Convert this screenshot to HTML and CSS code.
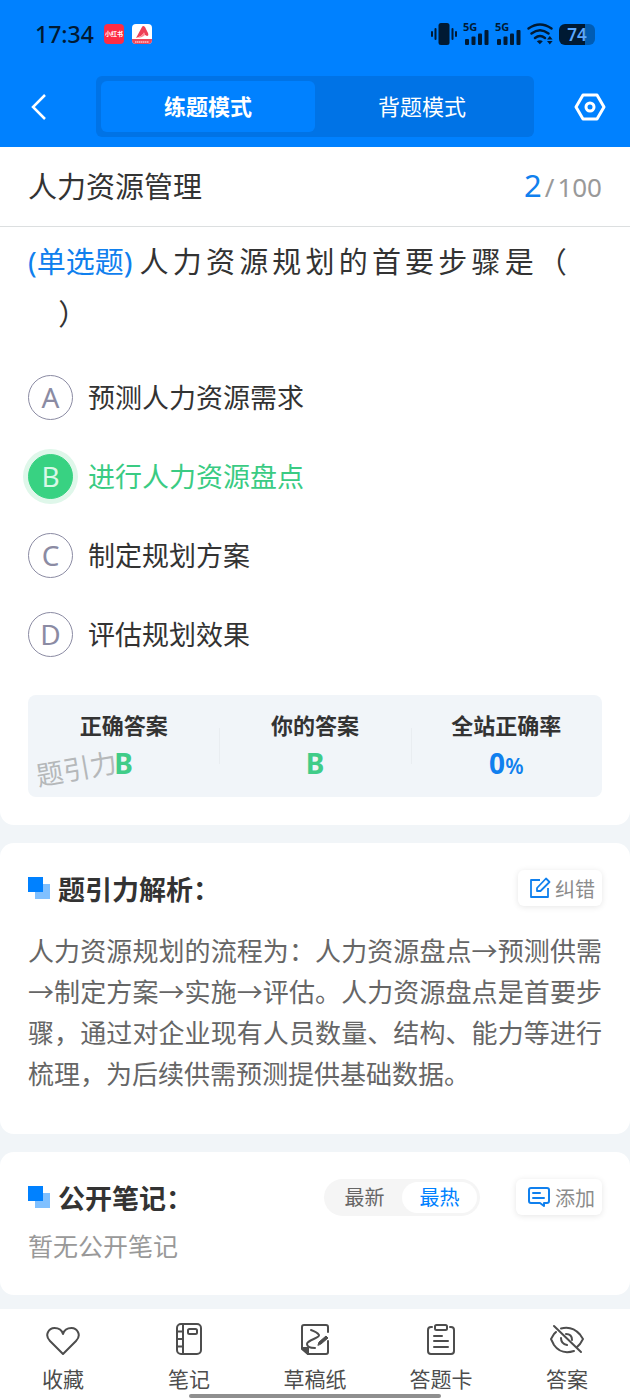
FILE: index.html
```html
<!DOCTYPE html>
<html lang="zh-CN">
<head>
<meta charset="utf-8">
<meta name="viewport" content="width=device-width, initial-scale=1">
<title>人力资源管理</title>
<link rel="stylesheet" href="styles.css">
</head>
<body>
<div class="app">
  <header class="top">
    <div class="status">
      <div class="status-left">
        <span class="clock">17:34</span>
        <span class="app-badge app-badge-red">小红书</span>
        <svg class="app-logo" viewBox="0 0 20 20" aria-hidden="true">
          <rect width="20" height="20" rx="4" fill="#fff"/>
          <path d="M0 15h20v1a4 4 0 0 1-4 4H4a4 4 0 0 1-4-4z" fill="#f0475a"/>
          <path d="M3 18h14" stroke="#f9c4ca" stroke-width="1.5" stroke-dasharray="1.5 .5"/>
          <path d="M4 14 10 3q1-2 3 0l3 6q1 3-1 3-2 0-3-3l-3 3z" fill="#ee4057"/>
          <path d="M4 14q6-1 8-6l1 3q-3 3-9 3z" fill="#ff8a92"/>
        </svg>
      </div>
      <div class="status-right">
        <svg width="26" height="22" viewBox="0 0 26 22" aria-hidden="true" fill="#001a33">
          <rect x="7.500" y="0" width="11" height="22" rx="2.500"/>
          <rect x="0" y="8" width="2" height="6" rx="1"/><rect x="3.500" y="5" width="2" height="12" rx="1"/>
          <rect x="20.500" y="5" width="2" height="12" rx="1"/><rect x="24" y="8" width="2" height="6" rx="1"/>
        </svg>
        <span class="cell"><span class="cell-type">5G</span>
          <svg width="26" height="22" viewBox="0 0 26 22" aria-hidden="true" fill="#001a33"><rect x="2" y="16" width="4" height="6" rx="1"/><rect x="8.500" y="13.500" width="4" height="8.500" rx="1"/><rect x="15" y="10.500" width="4" height="11.500" rx="1"/><rect x="21.500" y="7" width="4" height="15" rx="1"/></svg>
        </span>
        <span class="cell"><span class="cell-type">5G</span>
          <svg width="26" height="22" viewBox="0 0 26 22" aria-hidden="true" fill="#001a33"><rect x="2" y="16" width="4" height="6" rx="1"/><rect x="8.500" y="13.500" width="4" height="8.500" rx="1"/><rect x="15" y="10.500" width="4" height="11.500" rx="1"/><rect x="21.500" y="7" width="4" height="15" rx="1"/></svg>
        </span>
        <svg width="26" height="22" viewBox="0 0 26 22" aria-hidden="true" fill="none" stroke="#001a33" stroke-width="2.400" stroke-linecap="round">
          <path d="M1.500 5.500q11.500-8 23 0M4.500 10.500q8.500-6.500 17 0M8 15q5-4 10 0"/>
          <path d="M9.800 18.200q3-2 6 0l-3 3z" fill="#001a33" stroke="none"/>
          <path d="m20 16.500 2.800-3.500 2.800 3.500zM20 18l2.800 3.500 2.800-3.500z" fill="#001a33" stroke="none"/>
        </svg>
        <span class="battery">74</span>
      </div>
    </div>
    <div class="modes">
      <button class="icon-btn" type="button" aria-label="返回">
        <svg width="16" height="28" viewBox="0 0 16 28" fill="none" stroke="#fff" stroke-width="2.500"><path d="M14 2 2 14l12 12"/></svg>
      </button>
      <div class="segment">
        <button class="segment-item is-active" type="button">练题模式</button>
        <button class="segment-item" type="button">背题模式</button>
      </div>
      <button class="icon-btn icon-btn-end" type="button" aria-label="设置">
        <svg width="32" height="28" viewBox="0 0 32 28" fill="none" stroke="#fff" stroke-width="3" stroke-linejoin="round"><path d="M9 2h14l7 12-7 12H9L2 14z"/><circle cx="16" cy="14" r="4"/></svg>
      </button>
    </div>
  </header>

  <main class="content">
    <section class="card card-first">
      <div class="title-row">
        <h1 class="subject">人力资源管理</h1>
        <p class="progress"><span class="progress-now">2</span><span>/</span><span>100</span></p>
      </div>
      <div class="quiz">
        <p class="question">
          <span class="question-line"><span class="question-type">(单选题)</span>人力资源规划的首要步骤是（&nbsp;&nbsp;&nbsp;</span>
          <span class="question-rest">&nbsp;&nbsp;&nbsp;&nbsp;）</span>
        </p>
        <div class="options">
          <button class="option" type="button"><span class="mark">A</span>预测人力资源需求</button>
          <button class="option is-right" type="button"><span class="mark">B</span>进行人力资源盘点</button>
          <button class="option" type="button"><span class="mark">C</span>制定规划方案</button>
          <button class="option" type="button"><span class="mark">D</span>评估规划效果</button>
        </div>
        <div class="stats">
          <span class="watermark" aria-hidden="true">题引力</span>
          <div class="stat"><span class="stat-name">正确答案</span><strong class="stat-value">B</strong></div>
          <div class="stat"><span class="stat-name">你的答案</span><strong class="stat-value">B</strong></div>
          <div class="stat"><span class="stat-name">全站正确率</span><strong class="stat-value stat-rate">0<small class="percent">%</small></strong></div>
        </div>
      </div>
    </section>

    <section class="card analysis">
      <div class="card-head">
        <h2 class="card-title"><span class="squares"></span>题引力解析：</h2>
        <button class="chip" type="button">
          <svg width="22" height="22" viewBox="0 0 22 22" fill="none" stroke="#1080ee" stroke-width="1.800" stroke-linejoin="round"><path d="M11 3H2v17h17v-9"/><path d="m8 11 9-9.500 3.500 3.500-9 9H8z"/></svg>
          纠错
        </button>
      </div>
      <p class="analysis-text">人力资源规划的流程为：人力资源盘点→预测供需→制定方案→实施→评估。人力资源盘点是首要步骤，通过对企业现有人员数量、结构、能力等进行梳理，为后续供需预测提供基础数据。</p>
    </section>

    <section class="card notes">
      <div class="card-head">
        <h2 class="card-title"><span class="squares"></span>公开笔记：</h2>
        <div class="sort">
          <button class="sort-item" type="button">最新</button>
          <button class="sort-item is-active" type="button">最热</button>
        </div>
        <button class="chip" type="button">
          <svg width="24" height="22" viewBox="0 0 24 22" fill="none" stroke="#1080ee" stroke-width="2" stroke-linejoin="round" stroke-linecap="round"><path d="M4 2h16q2 0 2 2v11q0 2-2 2h-3v3l-4-3H4q-2 0-2-2V4q0-2 2-2z"/><path d="M6 7h7M6 12h11"/></svg>
          添加
        </button>
      </div>
      <p class="empty">暂无公开笔记</p>
    </section>
  </main>

  <nav class="tabbar">
    <a class="tab" href="#favorite">
      <svg class="tab-icon" viewBox="0 0 36 36"><path d="M18 33 5 20C-1 14 4 7 9.500 7 14 7 17 9.500 18 13c1-3.500 4-6 8.500-6C32 7 37 14 31 20z"/></svg>
      收藏
    </a>
    <a class="tab" href="#notes">
      <svg class="tab-icon" viewBox="0 0 36 36"><rect x="6" y="3" width="24" height="30" rx="4"/><path d="M12 3v30M6 10.500h6M6 18h6M6 25.500h6"/><rect x="17" y="8" width="9" height="5" rx="1.500"/></svg>
      笔记
    </a>
    <a class="tab" href="#draft">
      <svg class="tab-icon" viewBox="0 0 36 36"><path d="M31 11V6q0-2-2-2H7Q5 4 5 6v22l6 5h18q2 0 2-2V20"/><path d="M5 27h6v6z" fill="#4d4d4d"/><path d="M14 9q6 2 8 5c1 3-12 5-12 9 0 3 4 4 8 4"/><path d="m21 24 1-3 7-6 2 2-7 6z" fill="#4d4d4d" stroke-width="1"/></svg>
      草稿纸
    </a>
    <a class="tab" href="#sheet">
      <svg class="tab-icon" viewBox="0 0 36 36"><path d="M9 6H8Q5 6 5 9v21q0 3 3 3h20q3 0 3-3V9q0-3-3-3h-1"/><rect x="12" y="4" width="12" height="5" rx="1.500"/><path d="M11 15h8M11 20h14M11 26h14"/></svg>
      答题卡
    </a>
    <a class="tab" href="#answer">
      <svg class="tab-icon" viewBox="0 0 36 36"><path d="M12 7.500q11-3 19 6l3 4.500-3 5-3 3M25 30q-13 4-20-6l-3-6 3-5 2-2"/><path d="M17 13q6 0 6 6M12 17q0 6 6 7"/><path d="m5 5 27 26"/></svg>
      答案
    </a>
    <span class="home-bar"></span>
  </nav>
</div>
</body>
</html>
```
FILE: styles.css
```css
* { box-sizing: border-box; }

body {
  margin: 0;
  background: #f1f5f8;
  color: #333;
  font-family: "Noto Sans", "Noto Sans CJK SC", sans-serif;
}

h1, h2, p { margin: 0; }

button {
  padding: 0;
  border: 0;
  background: none;
  color: inherit;
  font: inherit;
  cursor: pointer;
}

svg { display: block; flex: none; }

.app {
  display: flex;
  flex-direction: column;
  min-height: 100vh;
}

/* Header */
.top {
  background: #0081ff;
  color: #fff;
  padding-bottom: 10px;
}

.status {
  display: flex;
  justify-content: space-between;
  align-items: center;
  height: 76px;
  padding: 0 35px 8px;
  color: #001a33;
}

.status-left { display: flex; align-items: center; gap: 8px; }

.status-right { display: flex; align-items: center; gap: 6px; }

.clock { font-size: 23px; font-weight: 500; margin-right: 2px; }

.app-badge {
  width: 20px;
  height: 20px;
  border-radius: 4px;
  background: #fe2c44;
  color: #fff;
  font-size: 6px;
  font-weight: 700;
  line-height: 20px;
  text-align: center;
}

.app-logo { width: 20px; height: 20px; }

.cell { position: relative; }

.cell-type {
  position: absolute;
  top: -1px;
  left: 0;
  font-size: 11px;
  font-weight: 700;
  line-height: 10px;
}

.battery {
  width: 36px;
  height: 21px;
  border-radius: 6px;
  background: linear-gradient(90deg, #001a33 72%, #005cb3 72%);
  color: #5aa8ff;
  font-size: 17px;
  font-weight: 600;
  line-height: 21px;
  text-align: center;
}

.modes {
  display: flex;
  align-items: center;
  padding: 0 24px 0 31px;
}

.icon-btn { width: 65px; flex: none; }

.icon-btn-end { display: flex; justify-content: flex-end; width: 41px; }

.segment {
  display: flex;
  flex: 1;
  margin-right: 31px;
  padding: 5px;
  border-radius: 6px;
  background: #0073e6;
}

.segment-item {
  flex: 1;
  height: 51px;
  padding-bottom: 4px;
  border-radius: 6px;
  font-size: 22px;
}

.segment-item.is-active { background: #0081ff; font-weight: 700; }

/* Cards */
.content {
  display: flex;
  flex-direction: column;
  gap: 18px;
}

.card { background: #fff; border-radius: 14px; }

.card-first { border-radius: 0 0 14px 14px; }

.title-row {
  display: flex;
  justify-content: space-between;
  align-items: center;
  height: 80px;
  padding: 0 28px 4px;
  border-bottom: 1px solid #dcdfe0;
}

.subject { font-size: 29px; font-weight: 400; }

.progress {
  display: flex;
  align-items: baseline;
  gap: 3px;
  color: #999;
  font-size: 26px;
}

.progress-now { color: #1080ee; font-size: 31px; }

.quiz { padding: 9px 28px 28px; }

.question { font-size: 29px; line-height: 52px; }

.question-line {
  display: block;
  text-align: justify;
  text-align-last: justify;
  white-space: nowrap;
}

.question-rest { display: block; }

.question-type { display: inline-block; margin-right: 3px; color: #1080ee; }

.options {
  display: flex;
  flex-direction: column;
  align-items: flex-start;
  gap: 34px;
  padding: 35px 0 38px;
}

.option {
  display: flex;
  align-items: center;
  gap: 15px;
  font-size: 27px;
  line-height: 45px;
}

.mark {
  width: 45px;
  height: 45px;
  border: 1px solid #8b8ba3;
  border-radius: 50%;
  color: #8b8ba3;
  font-size: 28px;
  line-height: 43px;
  text-align: center;
}

.option.is-right { color: #3acb83; }

.option.is-right .mark {
  border-color: #38d282;
  background: #38d282;
  box-shadow: 0 0 0 5px #dff7ea;
  color: #d9f8e7;
}

.stats {
  position: relative;
  display: grid;
  grid-template-columns: repeat(3, 1fr);
  padding: 13px 0 16px;
  border-radius: 8px;
  background: #f1f5f9;
  text-align: center;
}

.stat {
  display: flex;
  flex-direction: column;
  gap: 3px;
}

.stat + .stat {
  background: linear-gradient(#e9edf1, #e9edf1) left 20px / 1px 36px no-repeat;
}

.stat-name { font-size: 22px; font-weight: 700; line-height: 34px; }

.stat-value {
  position: relative;
  color: #40cc88;
  font-size: 28px;
  line-height: 36px;
}

.stat-rate { color: #1080ee; }

.percent { font-size: 21px; font-weight: 600; line-height: 1; }

.watermark {
  position: absolute;
  left: 8px;
  bottom: 8px;
  color: #b5b8ba;
  font-size: 27px;
  line-height: 40px;
  transform: rotate(-10deg);
}

.analysis { padding: 26px 28px 41px; }

.notes { padding: 26px 28px 29px; }

.card-head { display: flex; align-items: center; height: 38px; }

.card-title {
  display: flex;
  align-items: center;
  gap: 8px;
  margin-right: auto;
  font-size: 27px;
  font-weight: 700;
}

.squares {
  width: 22px;
  height: 22px;
  background:
    linear-gradient(#0081ff, #0081ff) left top / 15px 15px no-repeat,
    linear-gradient(#80c0ff, #80c0ff) right bottom / 15px 15px no-repeat;
}

.chip {
  display: flex;
  align-items: center;
  gap: 4px;
  height: 36px;
  padding: 0 7px 0 11px;
  border-radius: 6px;
  box-shadow: 0 1px 6px rgba(0, 0, 0, 0.1);
  color: #8c8c8c;
  font-size: 20px;
}

.analysis-text {
  padding-top: 22px;
  color: #666;
  font-family: "Noto Sans CJK SC", sans-serif;
  font-size: 26px;
  line-height: 41px;
  text-align: justify;
}

.sort {
  display: flex;
  margin-right: 36px;
  padding: 3px;
  border-radius: 19px;
  background: #f5f5f5;
}

.sort-item {
  width: 75px;
  height: 31px;
  border-radius: 16px;
  color: #666;
  font-size: 20px;
  line-height: 31px;
}

.sort-item.is-active { background: #fff; color: #0081ff; }

.empty {
  padding-top: 10px;
  color: #999;
  font-size: 25px;
  line-height: 40px;
}

/* Bottom bar */
.tabbar {
  position: relative;
  display: grid;
  grid-template-columns: repeat(5, 1fr);
  margin-top: auto;
  padding: 12px 0 4px;
  background: #fff;
}

.tab {
  display: flex;
  flex-direction: column;
  align-items: center;
  gap: 5px;
  color: #4d4d4d;
  font-size: 21px;
  line-height: 34px;
  text-decoration: none;
}

.tab-icon {
  width: 36px;
  height: 36px;
  fill: none;
  stroke: #4d4d4d;
  stroke-width: 2;
  stroke-linecap: round;
  stroke-linejoin: round;
}

.home-bar {
  position: absolute;
  bottom: 2px;
  left: 30%;
  right: 30%;
  height: 4px;
  border-radius: 2px;
  background: #8f8f8f;
}
```
